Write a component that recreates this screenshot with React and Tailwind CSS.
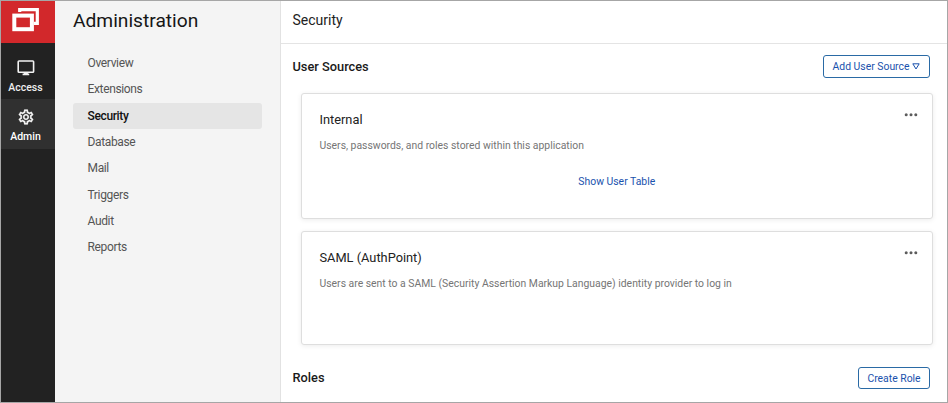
const NAV = ["Overview", "Extensions", "Security", "Database", "Mail", "Triggers", "Audit", "Reports"];

function Logo() {
  return (
    <svg width="28" height="25" viewBox="0 0 28 25" fill="none">
      <path d="M7.7 5V2.6H25.3V16.4H22" stroke="#fff" strokeWidth="3.2" />
      <rect x="2.3" y="8.6" width="17.6" height="13.6" stroke="#fff" strokeWidth="4" />
    </svg>
  );
}

function Monitor() {
  return (
    <svg width="18" height="16" viewBox="0 0 18 16" fill="none" className="block">
      <rect x="1.2" y="1" width="15.4" height="11.3" rx="0.8" stroke="#f2f2f2" strokeWidth="1.6" />
      <path d="M6.9 12h4v1.6h1.3V15.2H5.6v-1.6h1.3z" fill="#f2f2f2" />
    </svg>
  );
}

function Gear() {
  return (
    <svg width="18" height="18" viewBox="0 0 24 24" fill="#f2f2f2" stroke="#f2f2f2" strokeWidth="0.3" className="block">
      <path d="M19.43 12.98c.04-.32.07-.64.07-.98 0-.34-.03-.66-.07-.98l2.11-1.65c.19-.15.24-.42.12-.64l-2-3.46c-.09-.16-.26-.25-.44-.25-.06 0-.12.01-.17.03l-2.49 1c-.52-.4-1.08-.73-1.69-.98l-.38-2.65C14.46 2.18 14.25 2 14 2h-4c-.25 0-.46.18-.49.42l-.38 2.65c-.61.25-1.17.59-1.69.98l-2.49-1c-.06-.02-.12-.03-.18-.03-.17 0-.34.09-.43.25l-2 3.46c-.13.22-.07.49.12.64l2.11 1.65c-.04.32-.07.65-.07.98 0 .33.03.66.07.98l-2.11 1.65c-.19.15-.24.42-.12.64l2 3.46c.09.16.26.25.44.25.06 0 .12-.01.17-.03l2.49-1c.52.4 1.08.73 1.69.98l.38 2.65c.03.24.24.42.49.42h4c.25 0 .46-.18.49-.42l.38-2.65c.61-.25 1.17-.59 1.69-.98l2.49 1c.06.02.12.03.18.03.17 0 .34-.09.43-.25l2-3.46c.12-.22.07-.49-.12-.64l-2.11-1.65zm-1.98-1.71c.04.31.05.52.05.73 0 .21-.02.43-.05.73l-.14 1.13.89.7 1.08.84-.7 1.21-1.27-.51-1.04-.42-.9.68c-.43.32-.84.56-1.25.73l-1.06.43-.16 1.13-.2 1.35h-1.4l-.19-1.35-.16-1.13-1.06-.43c-.43-.18-.83-.41-1.23-.71l-.91-.7-1.06.43-1.27.51-.7-1.21 1.08-.84.89-.7-.14-1.13c-.03-.31-.05-.54-.05-.74s.02-.43.05-.73l.14-1.13-.89-.7-1.08-.84.7-1.21 1.27.51 1.04.42.9-.68c.43-.32.84-.56 1.25-.73l1.06-.43.16-1.13.2-1.35h1.39l.19 1.35.16 1.13 1.06.43c.43.18.83.41 1.23.71l.91.7 1.06-.43 1.27-.51.7 1.21-1.07.85-.89.7.14 1.13zM12 8c-2.21 0-4 1.79-4 4s1.79 4 4 4 4-1.79 4-4-1.79-4-4-4zm0 6c-1.1 0-2-.9-2-2s.9-2 2-2 2 .9 2 2-.9 2-2 2z" />
    </svg>
  );
}

function Dots() {
  return (
    <svg width="14" height="4" viewBox="0 0 14 4" fill="#5c5c5c" className="block">
      <circle cx="2.2" cy="1.7" r="1.5" />
      <circle cx="7" cy="1.7" r="1.5" />
      <circle cx="11.8" cy="1.7" r="1.5" />
    </svg>
  );
}

function Card({ title, text, className, children }) {
  return (
    <section className={`rounded-[3px] border border-[#dedede] bg-white pl-[18px] pr-[14px] shadow-[0_1px_5px_rgba(0,0,0,0.08)] ${className}`}>
      <div className="flex items-start justify-between">
        <h3 className="mt-[16px] text-[12.8px] leading-[20px] text-[#222]">{title}</h3>
        <div className="mt-[19px]"><Dots /></div>
      </div>
      <p className="mt-[7px] text-[10.4px] leading-[18px] text-[#757575]">{text}</p>
      {children}
    </section>
  );
}

export default function App() {
  return (
    <div className="flex h-[403px] w-[948px] overflow-hidden border border-[#a6a6a6] bg-white font-[Roboto,sans-serif]">
      <aside className="flex w-[54px] shrink-0 flex-col bg-[#222]">
        <div className="flex h-[42px] justify-center bg-[#d2282b] pt-[6px] pr-[4px]"><Logo /></div>
        <div className="flex h-[56px] flex-col items-center pt-[17px] pr-[5px]">
          <Monitor />
          <span className="mt-[4px] text-[10.5px] font-medium leading-[16px] text-[#eee]">Access</span>
        </div>
        <div className="flex h-[50px] flex-col items-center bg-[#303030] pt-[9px] pr-[5px]">
          <Gear />
          <span className="mt-[3px] text-[10.5px] font-medium leading-[16px] text-white">Admin</span>
        </div>
      </aside>
      <nav className="w-[225px] shrink-0 bg-[#f4f4f4] pl-[18px] pr-[18px]">
        <h1 className="mt-[7px] text-[19.2px] leading-[26px] text-[#161616]">Administration</h1>
        <ul className="mt-[16px]">
          {NAV.map((n) => (
            <li
              key={n}
              className={`flex h-[26.35px] items-center rounded-[3px] pb-[0.5px] pl-[14.5px] text-[12px] tracking-[-0.35px] ${n === "Security" ? "bg-[#e5e5e5] font-medium text-[#111]" : "text-[#555]"}`}
            >
              {n}
            </li>
          ))}
        </ul>
      </nav>
      <main className="min-w-0 flex-1 border-l border-[#e2e2e2]">
        <header className="flex h-[43px] items-center border-b border-[#e4e4e4] pl-[11.5px] pb-[3px] text-[14px] text-[#222]">Security</header>
        <div className="flex h-[49px] items-start justify-between pl-[11.5px] pr-[17px] pt-[11px]">
          <h2 className="mt-[2px] text-[12.8px] font-medium leading-[20px] text-[#1a1a1a]">User Sources</h2>
          <button className="flex h-[23px] w-[107px] items-center justify-center gap-[3px] rounded-[3px] border border-[#2a6aa5] pt-[1px] text-[10.4px] text-[#1a52ad]">
            Add User Source
            <svg width="8" height="7" viewBox="0 0 8 7" fill="none" className="-mt-[1px]"><path d="M0.8 0.8h6.4L4 6z" stroke="#1a52ad" strokeWidth="1" /></svg>
          </button>
        </div>
        <div className="flex flex-col gap-[12px] pl-[19.5px] pr-[14px]">
          <Card className="h-[126px]" title="Internal" text="Users, passwords, and roles stored within this application">
            <button className="mx-auto mt-[18px] block -translate-x-[2px] text-[10.4px] leading-[18px] text-[#1a52ad]">Show User Table</button>
          </Card>
          <Card className="h-[114px]" title="SAML (AuthPoint)" text="Users are sent to a SAML (Security Assertion Markup Language) identity provider to log in" />
        </div>
        <div className="mt-[22px] flex items-center justify-between pl-[11.5px] pr-[17px]">
          <h2 className="text-[12.8px] font-medium text-[#1a1a1a]">Roles</h2>
          <button className="flex h-[22px] w-[72px] items-center justify-center rounded-[3px] border border-[#2a6aa5] pt-[1px] text-[10.4px] text-[#1a52ad]">Create Role</button>
        </div>
      </main>
    </div>
  );
}
